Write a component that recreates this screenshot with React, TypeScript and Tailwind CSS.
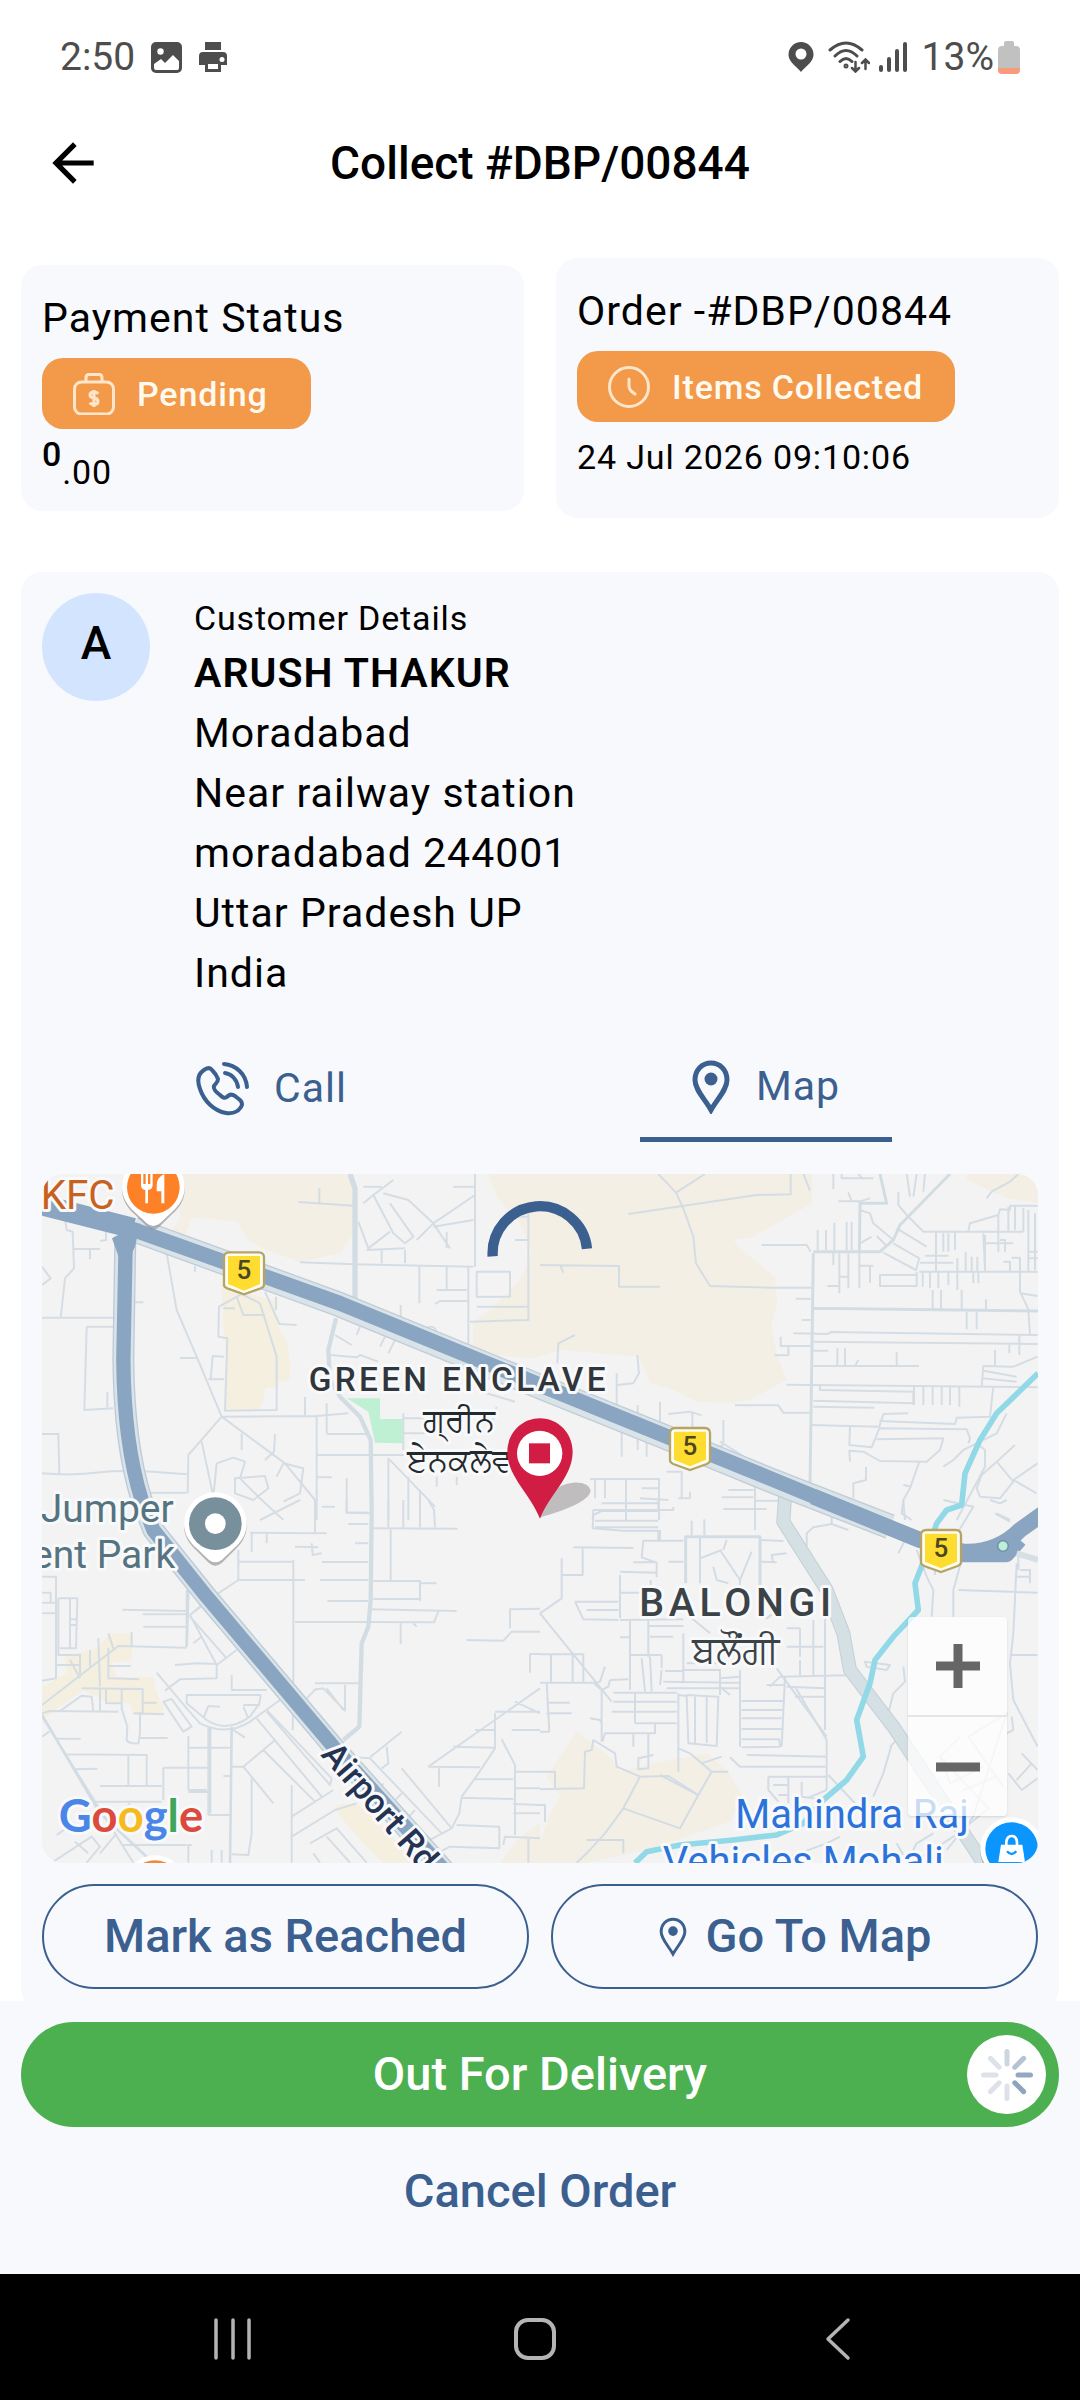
import React from 'react';
import { MdArrowBack } from 'react-icons/md';

const address = [
  'Moradabad',
  'Near railway station',
  'moradabad 244001',
  'Uttar Pradesh UP',
  'India',
];

const PinIcon = ({ className, stroke = 5 }: { className: string; stroke?: number }) => (
  <svg viewBox="0 0 38 54" fill="none" className={className} aria-hidden="true">
    <path
      d="M19 3C10 3 3 10 3 20C3 30 13 39 19 50C25 39 35 30 35 20C35 10 28 3 19 3Z"
      stroke="currentColor"
      strokeWidth={stroke}
    />
    <circle cx="19" cy="19" r="6.5" fill="currentColor" />
  </svg>
);

const CallIcon = () => (
  <svg viewBox="0 0 56 56" fill="none" stroke="currentColor" strokeWidth="4" strokeLinecap="round" strokeLinejoin="round" className="size-14" aria-hidden="true">
    <path d="M10 9C4 13 3 20 6 28C10 40 20 50 32 52C38 53 44 51 47 46C49 43 48 41 46 39L41 35C38 33 36 33 34 35C31 38 29 37 26 34C22 31 19 28 20 25C21 23 24 22 24 18C23 15 20 11 18 9C16 6 13 7 10 9Z" />
    <path d="M30 3C42 4 52 13 53 26M31 12C38 13 43 19 44 26" />
  </svg>
);

const StatusBar = () => (
  <div className="flex items-center justify-between px-[60px] pt-[37px] text-[#4d4d4d]">
    <div className="flex h-10 items-center gap-4">
      <span className="text-[39px] leading-10">2:50</span>
      <svg viewBox="0 0 31 31" className="size-[31px]" aria-hidden="true">
        <rect width="31" height="31" rx="5" fill="currentColor" />
        <circle cx="9.5" cy="9.5" r="3.2" fill="#fff" />
        <path d="M3 22L10 17L14 21L22 13L28 19V26Q28 28 26 28H5Q3 28 3 26Z" fill="#fff" />
      </svg>
      <svg viewBox="0 0 30 30" className="size-[30px]" aria-hidden="true">
        <path d="M7 0H23V8H7Z" fill="currentColor" />
        <path d="M5 10H25Q29 10 29 14V23H23V30H7V23H1V14Q1 10 5 10Z" fill="currentColor" />
        <path d="M10 22H20V27H10Z" fill="#fff" />
        <circle cx="24" cy="17.5" r="2.5" fill="#fff" />
      </svg>
    </div>
    <div className="flex h-10 items-center">
      <svg viewBox="0 0 26 30" className="h-[30px] w-[26px]" aria-hidden="true">
        <path fillRule="evenodd" d="M13 0A12.5 12.5 0 0 0 .5 12.5C.5 20 8 24 13 30C18 24 25.500 20 25.500 12.500A12.500 12.500 0 0 0 13 0ZM13 6.500A5.500 5.500 0 1 1 13 17.500A5.500 5.500 0 1 1 13 6.500Z" fill="currentColor" />
      </svg>
      <svg viewBox="0 0 42 32" fill="none" stroke="currentColor" strokeWidth="3" strokeLinecap="round" className="ml-[14px] h-8 w-[42px]" aria-hidden="true">
        <path d="M2 9Q18 -5 34 9M7 15Q18 4 29 15M12 20.500Q18 14.500 24 20.500" />
        <path d="M27.500 21V30M24 27L27.500 30.500L31 27M37.500 28V19M34 22L37.500 18.500L41 22" strokeWidth="2.500" />
        <circle cx="18" cy="25" r="1" />
      </svg>
      <svg viewBox="0 0 30 30" stroke="currentColor" strokeWidth="4" strokeLinecap="round" className="ml-2 size-[30px]" aria-hidden="true">
        <path d="M3 25V28M11 17V28M19 9V28M27 2V28" />
      </svg>
      <span className="ml-[14px] text-[39px] leading-10">13%</span>
      <svg viewBox="0 0 22 33" className="ml-1 h-[33px] w-[22px]" aria-hidden="true">
        <path d="M6 2Q6 0 8 0H14Q16 0 16 2V5H18Q22 5 22 9V27H0V9Q0 5 4 5H6Z" fill="#c1c1c1" />
        <path d="M0 27H22V29Q22 33 18 33H4Q0 33 0 29Z" fill="#fa9a7c" />
      </svg>
    </div>
  </div>
);

const Badge = ({ icon, children }: { icon: React.ReactNode; children: React.ReactNode }) => (
  <div className="mt-[10px] flex h-[71px] w-fit min-w-[269px] items-center gap-[22px] rounded-[21px] bg-[#f2994a] pr-8 pl-[31px] text-[#fffaf0]">
    {icon}
    <span className="text-[34px] leading-[50px] font-medium tracking-wide">{children}</span>
  </div>
);

const MoneyIcon = () => (
  <svg viewBox="0 0 42 42" fill="none" stroke="#ffe6cb" strokeWidth="3" className="size-[42px]" aria-hidden="true">
    <rect x="1.500" y="9" width="39" height="32" rx="7" />
    <path d="M13 9V5Q13 1.500 16 1.500H26Q29 1.500 29 5V9" />
    <path d="M25 21Q24 19 21 19Q17 19 17 22Q17 24.500 21 25Q25 25.500 25 28.500Q25 31.500 21 31.500Q18 31.500 17 29.500M21 17V34" />
  </svg>
);

const ClockIcon = () => (
  <svg viewBox="0 0 42 42" fill="none" stroke="#ffe6cb" strokeWidth="3" strokeLinecap="round" className="size-[42px]" aria-hidden="true">
    <circle cx="21" cy="21" r="19.500" />
    <path d="M21 13V20Q21 23 23 25L27 28" />
  </svg>
);

const Shield = ({ x, y }: { x: number; y: number }) => (
  <g transform={`translate(${x} ${y})`}>
    <path d="M-44 -61H44Q60 -61 60 -45V36Q60 43 50 47L0 65L-50 47Q-60 43 -60 36V-45Q-60 -61 -44 -61Z" fill="#fffdf0" stroke="#b5a468" strokeWidth="7" />
    <path d="M-48 -50H48V34L0 54L-48 34Z" fill="#ffdc30" />
    <text x="0" y="20" textAnchor="middle" fontSize="78" fontWeight="500" fill="#4b4720">5</text>
  </g>
);

const PoiPin = ({ x, y, color, children }: { x: number; y: number; color: string; children?: React.ReactNode }) => (
  <g transform={`translate(${x} ${y})`}>
    <path d="M0 -94A94 94 0 0 0 -94 0C-94 30 -78 55 -56 74L-20 110Q0 128 20 110L56 74C78 55 94 30 94 0A94 94 0 0 0 0 -94Z" fill="#8a8a8a" opacity="0.6" transform="translate(0 7)" />
    <path d="M0 -94A94 94 0 0 0 -94 0C-94 30 -78 55 -56 74L-20 108Q0 124 20 108L56 74C78 55 94 30 94 0A94 94 0 0 0 0 -94Z" fill="#fff" />
    <circle r="79" fill={color} />
    {children}
  </g>
);

const MapDrawing = () => (
  <svg viewBox="66 42 2988 2067" preserveAspectRatio="xMidYMid slice" className="block h-full w-full bg-[#f4f3f4]" role="img" aria-label="Delivery map">
    {/* land patches */}
    <g fill="#f4efe4">
      <path d="M470 42H1000V225L960 280L840 306L740 270L690 245L650 185L515 172L495 235L440 225L480 180Z" />
      <path d="M1405 42H2377V130L2280 185L2190 235L2140 238L2160 265L2265 350L2272 430L2255 500L2270 580L2300 660L2190 720L2140 728L2030 725L1960 690L1890 670L1855 590L1620 570L1540 595L1420 585L1360 560L1358 490L1420 440L1500 360L1535 280L1500 190L1430 110Z" />
      <path d="M2840 60V42H3054V130L2960 115Z" />
      <path d="M1670 1715L1770 1790L1800 1835L1900 1810L2060 1780L2120 1830L2170 1910L2130 1985L1880 2070L1700 2109H1560V2050L1590 1960L1620 1910L1580 1850Z" />
      <path d="M1440 2109L1500 2030L1560 1990V2109Z" />
    </g>
    <g fill="#f5efdf">
      <path d="M605 370L680 400L765 420L770 490L800 545L812 610L808 662L775 665L772 683L735 686L730 725L715 748L615 750L620 620L610 500Z" />
      <path d="M135 1485L220 1470L275 1420L335 1420V1500L275 1510L290 1550H400L410 1600L430 1640V1665H340L330 1630L260 1625L190 1590L66 1680V1580L140 1540Z" />
      <path d="M945 1935L1010 1930L1110 2020L1180 2109H1090L1040 2060L960 1970Z" />
    </g>
    <path d="M980 715H1080V777H1148V850L1065 848L1045 755Z" fill="#bff0d4" />

    {/* side streets */}
    <g fill="none" stroke="#d5dde4" strokeWidth="6" strokeLinejoin="round">
      <path d="M135 175L140 210L158 215L162 325L135 355L122 475M66 473H280M158 267H240M210 267V298M258 215V240L240 243M66 320L92 355L66 375M200 500H280M200 500L193 750L280 745M262 695V742M66 822H115L118 942M66 940Q160 948 240 937T500 943M335 427H370M440 280L470 450L530 590L605 770M480 594H530M565 658H612M612 590L578 588L572 658M525 318V335" />
      <path d="M605 770L505 885L503 1000M605 770L795 910L885 1020M545 845L580 1010M595 530L597 440L665 402L720 430L770 590V750L615 752L622 535ZM610 445H645M650 410L670 465H735M735 395L778 492L830 495M768 410V450M605 770L890 768L985 760M855 710V765M920 730V820M920 822H1040M890 770V1080M765 822L762 875L735 900M665 820V870M890 885H1160M980 955V1058L1050 1060M890 952H935M905 1040H945M1105 895L1245 1040M1105 895V1080M1165 950V1080M1200 990V1080" />
      <path d="M835 126L1000 137M898 85V130M840 307L1000 313L1360 320M1030 80H1085M1120 60L1060 105L1030 130M1090 100L1165 120L1240 190L1290 265M1060 105L1120 220L1155 250L1180 230L1110 130M1015 185L1045 265L1110 215M1040 270L1155 265M1085 270V310M1155 270V310M1240 190L1365 105M1240 190L1190 240M1280 215V265M1365 42V320M1345 320V560M1240 200L1360 180M1300 80H1365" />
      <path d="M1370 335H1470V410H1370ZM1525 140V480L1350 485M1370 440H1525M1485 170H1525M1485 240H1525M1280 320V390M1250 390H1340M1198 320V430M1245 432L1260 423H1345M1142 435V480M945 525L995 555M1020 500L1010 525M930 585L1010 592L1020 585L1075 605M1095 530L1080 560M1125 540L1105 580M1215 505Q1250 490 1250 525M1150 760V870M1150 775H1240M1150 820H1260M1430 740L1415 790M1400 700L1485 725M1250 950V980M1310 950V975" />
      <path d="M590 910L580 1010M590 910L640 893L675 905L660 955L715 1010L790 1080M645 955L735 948L745 985L700 1020L645 1000ZM790 910L850 925L840 1000L790 1025M770 950L790 910M840 1020L720 1080M385 998H500" />
    </g>
    <g fill="none" stroke="#d5dde4" strokeWidth="6" strokeLinejoin="round" transform="translate(1560 0)">
      <path d="M355 42L408 98L495 42M408 98L430 145L460 230L468 310L510 378L690 383L815 383M265 162L650 105L752 103V42M0 315L237 318V380H360M60 315L70 338M52 610L55 550L105 525M665 255H800L812 275M767 416H812M785 480H812M760 520L862 522L875 516L1493 525M722 530V558H812M703 586H745V560M740 674L1493 682M585 736H715L730 758H812" />
      <path d="M230 640V735M292 585L297 640L280 670L232 675M245 815V890M293 735V870M360 725V785M320 820V890M385 762L450 755L485 766M457 755V800M550 780V855L535 860M605 885L540 845M380 935H425V1015M150 957H357V1080M165 960V1015M195 960V1015M258 960V1080M305 985H357M300 1015L385 1020M400 1040V1050H160L158 1080M450 995V1015H415M545 1012H640M565 990H640M550 1047H680M645 975V1110M645 1022H720" />
      <path d="M790 42L810 92M880 42V88M905 42V55H1000M955 42L970 58M895 124H960L990 115M925 97L935 124M960 150L990 160L1000 190L1060 240M960 250L995 230M1010 228L1040 258M1075 97V135L1100 165M1100 42L1110 110M1130 42L1120 110M1155 42L1150 95M1060 250L1138 295L1128 330L1030 278M1070 205L1160 260M1100 165L1150 215H1450M1285 212L1290 190L1375 165M1340 115L1355 95L1410 65L1435 42" />
      <path d="M1375 165L1380 148L1410 150V137H1493M1375 165V275M1450 145V215M1405 140V215M1425 140V210M1465 150V335M1485 160V330M1335 225V335M1330 250H1420M1380 240H1395V275M1330 220L1335 330M1245 215V270M1210 220V275M1225 220V275M1188 215V335M1155 287H1225M1140 308H1240M1138 335H1493M1252 295V390M1277 275V335M1295 290V335M1312 290V335M1390 305H1410V335M1415 293H1440V335M1465 275H1493M1465 295H1493" />
      <path d="M1020 345H1130V378H1020ZM1130 335V378M1148 335V380M1170 335V385M1195 335V385M1225 335V375M1300 335V370M1315 335V370M1178 390V448M1203 390V448M1265 390V448M1338 418V448M1440 335V395L1465 448L1470 525M1440 400L1493 408M1280 455V508M1310 455V508M833 210V270M858 210V270M883 188V270M920 185V270M935 185V270M880 275V315M898 280V400M925 280V385M862 378H898M900 350H928M958 275V385M958 317H1000M990 317V368" />
      <path d="M820 545L1493 552M1438 525V585M1408 552V580M820 572H865M892 565V615M915 565V615M820 618H1137M945 618L955 600M1070 577V618M1365 570V620M1493 590L1420 620L1330 618L1325 680M1330 632L1430 650M1325 655L1430 665M840 675V690L1120 695V735M820 722L1120 730M1122 680V735M1150 680V735M1178 680V735M1205 680V735M1230 680V735M1258 680V740M820 740L1003 743M815 795L1018 800L1030 762L1105 760M1018 783L1245 792L1250 773L1350 770L1360 680" />
      <path d="M930 800L928 855L995 862L1018 805L1280 808L1290 835L1285 850M1010 838L1210 835L1200 870L1160 905L1020 903L970 875L928 872L930 905M1400 760L1370 820L1310 850L1270 870L1240 900L1210 920M1310 850L1335 870L1335 920L1250 1080M1370 905L1420 965L1380 1015L1320 1010L1310 985L1325 945L1370 905L1425 855M1420 960L1493 910M1420 960L1490 1000M978 920V960L940 970V1015M1138 905L1110 985L1090 1020L1095 1080M1090 975L1115 980M1370 1060L1410 1080" />
    </g>
    <g fill="none" stroke="#d5dde4" strokeWidth="6" strokeLinejoin="round" transform="translate(0 1020)">
      <path d="M66 230H108V535L66 542M66 278H92V308M66 308H108M66 340H108M115 295H172L168 445H150V295M115 295V465H180V530M150 358H168M150 375H168M120 445H150M108 495H180M66 615L295 438L500 443M180 535L150 480M210 450V500M235 415L240 560M265 400L280 445M265 445V535L358 538M265 498H332M335 395V440M307 329L500 333M368 343H500M370 380H500M500 270V440" />
      <path d="M185 565L368 567V645M258 565V610H305M305 567V630M240 565V635M66 640L90 633L295 635M120 633L185 587L215 590L220 635M368 608H410M340 640L432 643M305 625L322 680L320 720Q325 732 355 730L360 700V635M360 714H443M66 650L340 1088M66 710L88 695M110 716H182M135 763L380 765V860M160 808L232 806M325 765V855M240 858H425M505 708V870M505 743H630M505 876H565M430 803H565M430 803V900M220 905H425M610 828H630" />
      <path d="M655 150V240L595 280M655 185H820M655 240L855 240M595 280L510 345L590 495V535L480 538L435 572M650 450L590 495M510 345L545 315M545 410L520 430M510 350L620 475M465 495L530 490L588 492M820 240V550L818 690M820 180V240M690 98L885 100H920M740 100V130M695 100V155M885 0V100M825 140L895 142M875 130L878 165L905 160M905 186H1045M900 240H1045M922 303H1045M985 72H1045M980 0V37L1045 38M1005 130H1045" />
      <path d="M1060 85L1313 86M1105 0V82M1150 0V82M1200 0V82M1245 82L1242 30L1225 0M1112 85V245M1060 243H1200V303M1200 250H1250M1060 297H1203M1050 328L1310 333M1255 335L1242 367L1050 366M825 366H1045M1142 370V433M1180 370L1190 380M885 550H1018M880 570L910 565L975 632V555M920 565L970 630M850 605L890 565M1340 420L1450 422L1475 395H1560M1470 385V328L1560 326M1560 462H1530V518M410 518L500 625L540 670Q620 710 690 665L780 600M635 525V570H740" />
      <path d="M500 585H722L718 610L690 650Q620 700 560 660L500 610ZM550 655L565 618L600 620M670 615H720M685 655L670 620M430 605L455 597L515 680L490 695ZM565 685V945M565 945H630M740 630L935 835L930 855L740 635M710 655L905 890M640 690L675 713M765 720L670 800L760 910M670 800H635M730 750L885 905M695 835V1000L685 1065L635 1063M505 870H560M515 1035H505V1088M575 1050V1088M605 1050V1088M815 855V1088M815 950L940 870M815 1010L945 930L1010 910M870 1030L950 985L1040 1088" />
      <path d="M980 770L1050 775L1265 1000M1145 695L1050 772M1100 740L1105 790L1085 805M1145 805L1295 985M1225 800L1560 565M1225 800L1380 802M1257 805V860M1300 740L1425 743M1365 690H1425M1425 640V745L1365 835L1325 890L1318 940L1295 985L1210 1030M1425 635H1560M1485 605L1560 640M1475 690H1560M1445 718L1485 795V1005M1365 838H1480M1325 893L1480 897M1485 815H1560M1485 865H1560M1480 912L1560 915M1480 940H1560M1310 975L1438 980V1045L1290 1040L1250 1060M1450 1035L1455 1010L1560 1015M1525 1015V1088" />
      <path d="M110 1005L160 970M100 1085L215 1010L240 1040L200 1088M165 1025L205 1060M330 910L300 940M290 1000L240 1060M310 1035H500M1090 850L1030 930M1145 880L1080 950M1185 930L1130 990M1210 1000L1160 1060M880 1060L900 1088M920 1010L990 1088" />
    </g>
    <g fill="none" stroke="#d3dce4" strokeWidth="6" strokeLinejoin="round" transform="translate(1560 1020)">
      <path d="M185 33H355V0M185 33L160 45L158 85L250 92H355M165 62H355M165 82H355M185 10H355M310 120L305 172L350 188V232M310 122H430M100 142L280 144M128 142V225H65V295L0 340M65 175V295M280 187H350M240 215L350 218M240 225V355M240 278H305M332 240V275M355 90V120M385 185H430M455 62V105M493 58V105M360 120V90" />
      <path d="M105 305H235M105 305L130 358L235 360M140 330H235M240 360L430 358M0 340L215 605M0 463H130V548M33 463V548M0 548H160L185 570M98 463V548M185 570V725M20 548L28 695H0M20 608H90M20 640H95M150 655L180 660L185 670M195 500L180 545L165 550M270 360V465M240 412H270M270 465H365M325 360V470M325 378H430M365 465V505M330 410H400M270 465V570M330 470L335 575M305 475L315 575M365 510L360 555" />
      <path d="M210 540L265 538M210 540L205 560L185 570M220 578H410M220 605H410M215 635H410M285 580V670M285 670H410M345 670V700H195L187 725M280 700V740M325 700V805L295 808V775L340 765M375 513H430M430 400V550M480 110V250M540 150L600 240L635 155M560 120L550 150M480 175L545 150M520 200L530 240L565 250M600 240V260M660 120L730 123M660 185L710 187M700 190L695 165L740 160" />
      <path d="M415 580V815M415 585L440 588L445 730L530 738L535 590L440 585M465 590V730M500 590V730M430 510H540V585M440 490H535M370 545L600 548M380 565H600M600 510V740M605 603H735M605 630H730M605 655H725M605 687H725M605 718H718L720 740L605 742M620 765L860 770M570 772L600 800H860M735 530L725 740M765 560L860 720V870M740 560L855 565M765 590H855M680 555H735M720 530L950 525M720 530L690 560M780 480V525M855 365V690" />
      <path d="M710 505L860 710M820 360V525M780 385V470M740 385H780M740 440H850M855 365V355M510 400L450 350M665 350L680 355L700 340M540 535L600 530M540 560L570 585M415 745L450 760L515 815L475 885L360 825M515 815H565M485 790L545 770M475 885L420 985L250 925L300 830L230 800L225 760L160 720L155 750L135 755L132 865L0 868M0 815H45V868M300 830L385 828L475 885M250 925L195 1000L140 1060L110 1088M0 915H15V965M140 1020H250V1060" />
      <path d="M685 830H860M685 830V870L715 905M745 830V910M700 855H745M785 845V890L860 900M715 885H745M865 825L950 915M860 870L800 895M1130 150L1160 230L1180 270L1175 350M1265 180L1240 270V350M1160 205H1185V225M1255 270L1493 278M1430 190L1420 400L1410 490L1420 600L1493 740M1415 465H1493M1440 210H1470V250M1430 230H1470M1435 165V210M875 0V72L820 82L800 100V140M875 72L925 90M1075 160L1110 90M975 485L1050 495L1040 510L980 500ZM1090 500L1095 545L1060 580L1045 640" />
      <path d="M1055 735L1030 820L1000 890M1050 740L1090 700M1400 700L1420 690L1415 650M1405 820L1445 870L1493 835M1430 840L1475 790M1445 760L1493 810M1340 930L1240 1010L1120 1088M1300 950L1220 1050M1180 1000L1130 1030L1100 1088M1070 1030L1090 1065M700 1088L860 1030L900 1010M1090 0L1085 40L1115 60M1210 0L1300 20L1270 70L1220 150M1350 0L1380 10L1400 0M1365 40L1410 65" />
      <path d="M1285 710L1400 640L1300 950M1285 710L1390 860M1260 710L1200 770L1350 930M1200 770L1230 850L1330 800M1270 870L1370 830" />
    </g>

    {/* wider streets */}
    <g fill="none" stroke="#d2dde3" strokeLinejoin="round">
      <path d="M990 42L1005 85V440" strokeWidth="16" />
      <path d="M948 475L925 570L930 660L960 710L1020 770L1052 840L1055 1060L1052 1320L1045 1400L1025 1450L1018 1700L970 1740" strokeWidth="13" />
      <path d="M2380 280L2370 980M2380 275H2580L2620 240L2640 195L2790 42M2380 445L3054 453M2518 280L2520 130H2600L2580 42" strokeWidth="9" />
      <path d="M635 1700L630 2109M505 1290L500 1460M66 1665L240 1960L400 2109M570 1700V1960" strokeWidth="8" />
      <path d="M1997 1270V1130H2220V1300" strokeWidth="9" />
    </g>
    <path d="M2295 1010L2290 1085L2420 1290L2470 1420L2490 1530L2620 1700L2890 2109" fill="none" stroke="#c2d0d6" strokeWidth="42" strokeLinejoin="round" />
    <path d="M2295 1010L2290 1085L2420 1290L2470 1420L2490 1530L2620 1700L2890 2109" fill="none" stroke="#d5e0e4" strokeWidth="36" strokeLinejoin="round" />
    <path d="M3054 640L2930 760L2880 840L2835 940L2825 1035L2780 1050L2750 1090L2720 1180L2685 1270L2695 1350L2620 1430L2565 1500L2550 1570L2510 1680L2530 1790L2480 1860L2410 1920L2350 1990L2270 2025L2140 2040L1980 2055L1880 2075L1845 2109" fill="none" stroke="#92d9e7" strokeWidth="17" strokeLinejoin="round" />

    {/* highways */}
    <g fill="none" strokeLinejoin="round">
      <path d="M340 208L960 434L1560 680L1930 829L2250 960L2610 1100" stroke="#c0cdd8" strokeWidth="76" />
      <path d="M340 208L960 434L1560 680L1930 829L2250 960L2610 1100" stroke="#d9e3e8" strokeWidth="68" />
      <path d="M316 230L310 600Q312 850 365 1020L400 1110L560 1310L940 1760L1290 2150" stroke="#bccbd7" strokeWidth="66" />
      <path d="M316 230L310 600Q312 850 365 1020L400 1110L560 1310L940 1760L1290 2150" stroke="#d9e3e8" strokeWidth="58" />
      <path d="M66 130L330 205L960 430L1560 675L1930 825L2250 955L2700 1140" stroke="#8aa5c1" strokeWidth="45" />
      <path d="M66 135L340 205" stroke="#8aa5c1" strokeWidth="62" />
      <path d="M318 200L310 600Q312 850 365 1020L400 1110L560 1310L940 1760L1290 2150" stroke="#8aa5c1" strokeWidth="43" />
      <path d="M2380 1010L2700 1140L2830 1175Q2930 1180 3000 1110L3070 1060" stroke="#8aa5c1" strokeWidth="48" />
      <path d="M2810 1185H2960L3000 1140" stroke="#8aa5c1" strokeWidth="44" />
      <path d="M2990 1180L3054 1200" stroke="#d5e0e4" strokeWidth="18" />
    </g>
    <path d="M276 235L360 190L345 260L330 290H296Z" fill="#8aa5c1" />
    <circle cx="2949" cy="1158" r="16" fill="#bff0d4" stroke="#6f94b0" strokeWidth="5" />

    {/* place names */}
    <g stroke="#f8f9fa" strokeWidth="18" strokeLinejoin="round" paintOrder="stroke">
      <text x="62" y="148" fontSize="121" fill="#c9611c">KFC</text>
      <text x="62" y="1085" fontSize="117" fill="#567380">Jumper</text>
      <text x="466" y="1225" fontSize="117" textAnchor="end" fill="#567380">ent Park</text>
      <text x="866" y="692" fontSize="100" fontWeight="500" letterSpacing="10" fill="#30363b">GREEN ENCLAVE</text>
      <text x="1318" y="812" fontSize="96" textAnchor="middle" fill="#24292d">ਗ੍ਰੀਨ</text>
      <text x="1318" y="932" fontSize="96" textAnchor="middle" fill="#24292d">ਏਨਕਲੇਵ</text>
      <text x="1858" y="1368" fontSize="118" fontWeight="500" letterSpacing="14" fill="#3c4347">BALONGI</text>
      <text x="2146" y="1508" fontSize="114" textAnchor="middle" fill="#3c4347">ਬਲੌਂਗੀ</text>
      <text x="2146" y="2005" fontSize="120" fill="#2b73da">Mahindra Raj</text>
      <text x="1928" y="2145" fontSize="120" fill="#2b73da">Vehicles Mohali</text>
      <text transform="translate(900 1785) rotate(49)" fontSize="103" fontWeight="500" fill="#243352">Airport Rd</text>
      <text x="116" y="2016" fontSize="136" fontFamily="Lato, sans-serif" fontWeight="700">
        <tspan fill="#4a86e8">G</tspan>
        <tspan fill="#dc4a3e">o</tspan>
        <tspan fill="#f5bb1c">o</tspan>
        <tspan fill="#4a86e8">g</tspan>
        <tspan fill="#3fa558">l</tspan>
        <tspan fill="#dc4a3e">e</tspan>
      </text>
    </g>

    <Shield x={672} y={338} />
    <Shield x={2010} y={865} />
    <Shield x={2763} y={1171} />

    <PoiPin x={400} y={82} color="#ff8127">
      <path d="M-37 -40V-8Q-37 6 -24 8V48H-16V8Q-2 6 -2 -8V-40H-9V-10H-16V-40H-23V-10H-30V-40ZM33 -40Q10 -30 10 -5V12H24V48H33Z" fill="#fff" />
    </PoiPin>
    <PoiPin x={586} y={1091} color="#78909c">
      <circle r="31" fill="#fff" />
    </PoiPin>
    <PoiPin x={405} y={2180} color="#f0883e" />
    <PoiPin x={2975} y={2066} color="#0a95ff">
      <path d="M-32 -12H32L40 40H-40Z" fill="#fff" />
      <path d="M-16 -10V-20Q-14 -38 0 -38T16 -20V-10" fill="none" stroke="#fff" strokeWidth="8" />
      <path d="M-14 8Q0 24 14 8" fill="none" stroke="#0a95ff" strokeWidth="7" />
    </PoiPin>

    {/* drop-off marker */}
    <path d="M1560 1072C1570 1010 1610 972 1660 968Q1706 966 1712 992Q1708 1030 1560 1072Z" fill="#b5b3b3" opacity="0.85" />
    <path d="M1560 775C1505 775 1462 820 1462 875C1462 950 1530 1000 1560 1076C1590 1000 1658 950 1658 875C1658 820 1615 775 1560 775Z" fill="#d11c43" />
    <circle cx="1559" cy="880" r="68" fill="#fff" />
    <rect x="1527" y="850" width="63" height="60" fill="#d11c43" />

    <path d="M1418 289A142 142 0 0 1 1701 266" fill="none" stroke="#3b608f" strokeWidth="31" />
  </svg>
);

const ZoomControls = () => (
  <div className="absolute right-[31px] bottom-[47px] flex w-[99px] flex-col rounded-sm bg-white/75 text-[#666] shadow">
    <button type="button" aria-label="Zoom in" className="flex h-[100px] items-center justify-center border-b-2 border-[#e6e6e6]">
      <svg viewBox="0 0 44 44" className="size-11"><path d="M22 0V44M0 22H44" stroke="currentColor" strokeWidth="9" /></svg>
    </button>
    <button type="button" aria-label="Zoom out" className="flex h-[99px] items-center justify-center">
      <svg viewBox="0 0 44 44" className="size-11"><path d="M0 22H44" stroke="currentColor" strokeWidth="9" /></svg>
    </button>
  </div>
);

// spokes run clockwise from twelve o'clock
const spokes = ['#cdd6e0', '#b5c3d3', '#94a8c1', '#8fa5bf', '#dde2ea', '#dde2ea', '#dde2ea', '#dde2ea'];

const Spinner = () => (
  <span className="absolute right-[13px] flex size-[79px] items-center justify-center rounded-full bg-white">
    <svg viewBox="-26 -26 52 52" className="size-[52px]" aria-hidden="true">
      {spokes.map((color, i) => (
        <path key={i} d="M0 -11V-23.500" stroke={color} strokeWidth="5" strokeLinecap="round" transform={`rotate(${i * 45})`} />
      ))}
    </svg>
  </span>
);

const NavBar = () => (
  <nav className="flex h-[126px] items-center justify-between bg-black px-[206px] pt-1 text-[#b4b4b4]">
    <button type="button" aria-label="Recent apps">
      <svg viewBox="0 0 54 44" stroke="currentColor" strokeWidth="3.500" strokeLinecap="round" className="h-11 w-[54px]"><path d="M10 3V41M27 3V41M43 3V41" /></svg>
    </button>
    <button type="button" aria-label="Home" className="mr-[10px]">
      <svg viewBox="0 0 44 44" fill="none" stroke="currentColor" strokeWidth="4" className="size-11"><rect x="3" y="3" width="38" height="38" rx="12" /></svg>
    </button>
    <button type="button" aria-label="Back">
      <svg viewBox="0 0 54 44" fill="none" stroke="currentColor" strokeWidth="3.500" strokeLinecap="round" strokeLinejoin="round" className="h-11 w-[54px]"><path d="M28 3L8 22L28 41" /></svg>
    </button>
  </nav>
);

const App = () => {
  return (
    <div className="flex min-h-screen flex-col bg-white font-[Roboto,sans-serif] text-black">
      <StatusBar />
      <header className="grid grid-cols-[62px_1fr_62px] items-center px-[42px] pt-[55px]">
        <button type="button" aria-label="Go back">
          <MdArrowBack className="size-[62px]" />
        </button>
        <h1 className="text-center text-[46px] leading-[60px] font-medium">Collect #DBP/00844</h1>
      </header>

      <main className="flex-1 px-[21px]">
        <div className="flex items-center gap-8 pt-16">
          <section className="flex-1 rounded-[21px] bg-[#f8f9fd] px-[21px] pt-[23px] pb-[18px]">
            <h2 className="text-[41px] leading-[60px] tracking-wide">Payment Status</h2>
            <Badge icon={<MoneyIcon />}>Pending</Badge>
            <p className="mt-1 flex text-[34px] leading-[42px] tracking-wide">
              <span className="font-medium">0</span>
              <span className="pt-[18px]">.00</span>
            </p>
          </section>
          <section className="flex-1 rounded-[21px] bg-[#f8f9fd] px-[21px] pt-[23px] pb-9">
            <h2 className="text-[41px] leading-[60px] tracking-wide">Order -#DBP/00844</h2>
            <Badge icon={<ClockIcon />}>Items Collected</Badge>
            <p className="mt-[10px] text-[34px] leading-[50px] tracking-wide">24 Jul 2026 09:10:06</p>
          </section>
        </div>

        <section className="mt-[54px] rounded-[21px] bg-[#f8f9fd] px-[21px] pt-[21px] pb-5">
          <div className="flex items-start gap-11">
            <div className="flex size-[108px] items-center justify-center rounded-full bg-[#d3e4ff] pb-2 text-[46px] font-medium">A</div>
            <div className="flex-1">
              <h2 className="text-[34px] leading-[50px] tracking-wide">Customer Details</h2>
              <p className="text-[41px] leading-[60px] font-semibold tracking-wide">ARUSH THAKUR</p>
              <address className="text-[41px] leading-[60px] tracking-wide not-italic">
                {address.map(line => (
                  <div key={line}>{line}</div>
                ))}
              </address>
              <div className="mt-[33px] grid grid-cols-2 text-[41px] tracking-wide text-[#3b608f]">
                <button type="button" className="flex h-[106px] items-center gap-6 justify-self-start">
                  <CallIcon />
                  Call
                </button>
                <button type="button" className="ml-6 flex h-[106px] w-[252px] items-center justify-center gap-[26px] border-b-[5px] border-[#3b608f]">
                  <PinIcon className="h-[54px] w-[38px]" />
                  Map
                </button>
              </div>
            </div>
          </div>

          <div className="relative mt-8 h-[689px] overflow-hidden rounded-[21px]">
            <MapDrawing />
            <ZoomControls />
          </div>

          <div className="mt-[21px] grid grid-cols-2 gap-[22px] text-[47px] font-medium text-[#3b608f]">
            <button type="button" className="h-[105px] rounded-full border-2 border-[#3b608f]">Mark as Reached</button>
            <button type="button" className="flex h-[105px] items-center justify-center gap-[18px] rounded-full border-2 border-[#3b608f]">
              <PinIcon className="h-10 w-[30px]" stroke={4} />
              Go To Map
            </button>
          </div>
        </section>
      </main>

      <footer className="relative -mt-3 bg-[#f8f9fd] px-[21px] pt-[21px] pb-[30px] text-[47px] font-medium">
        <button type="button" className="relative flex h-[105px] w-full items-center justify-center rounded-full bg-[#4caf50] text-white">
          Out For Delivery
          <Spinner />
        </button>
        <button type="button" className="mt-3 h-[105px] w-full text-[#3b608f]">Cancel Order</button>
      </footer>
      <NavBar />
    </div>
  );
};

export default App;
